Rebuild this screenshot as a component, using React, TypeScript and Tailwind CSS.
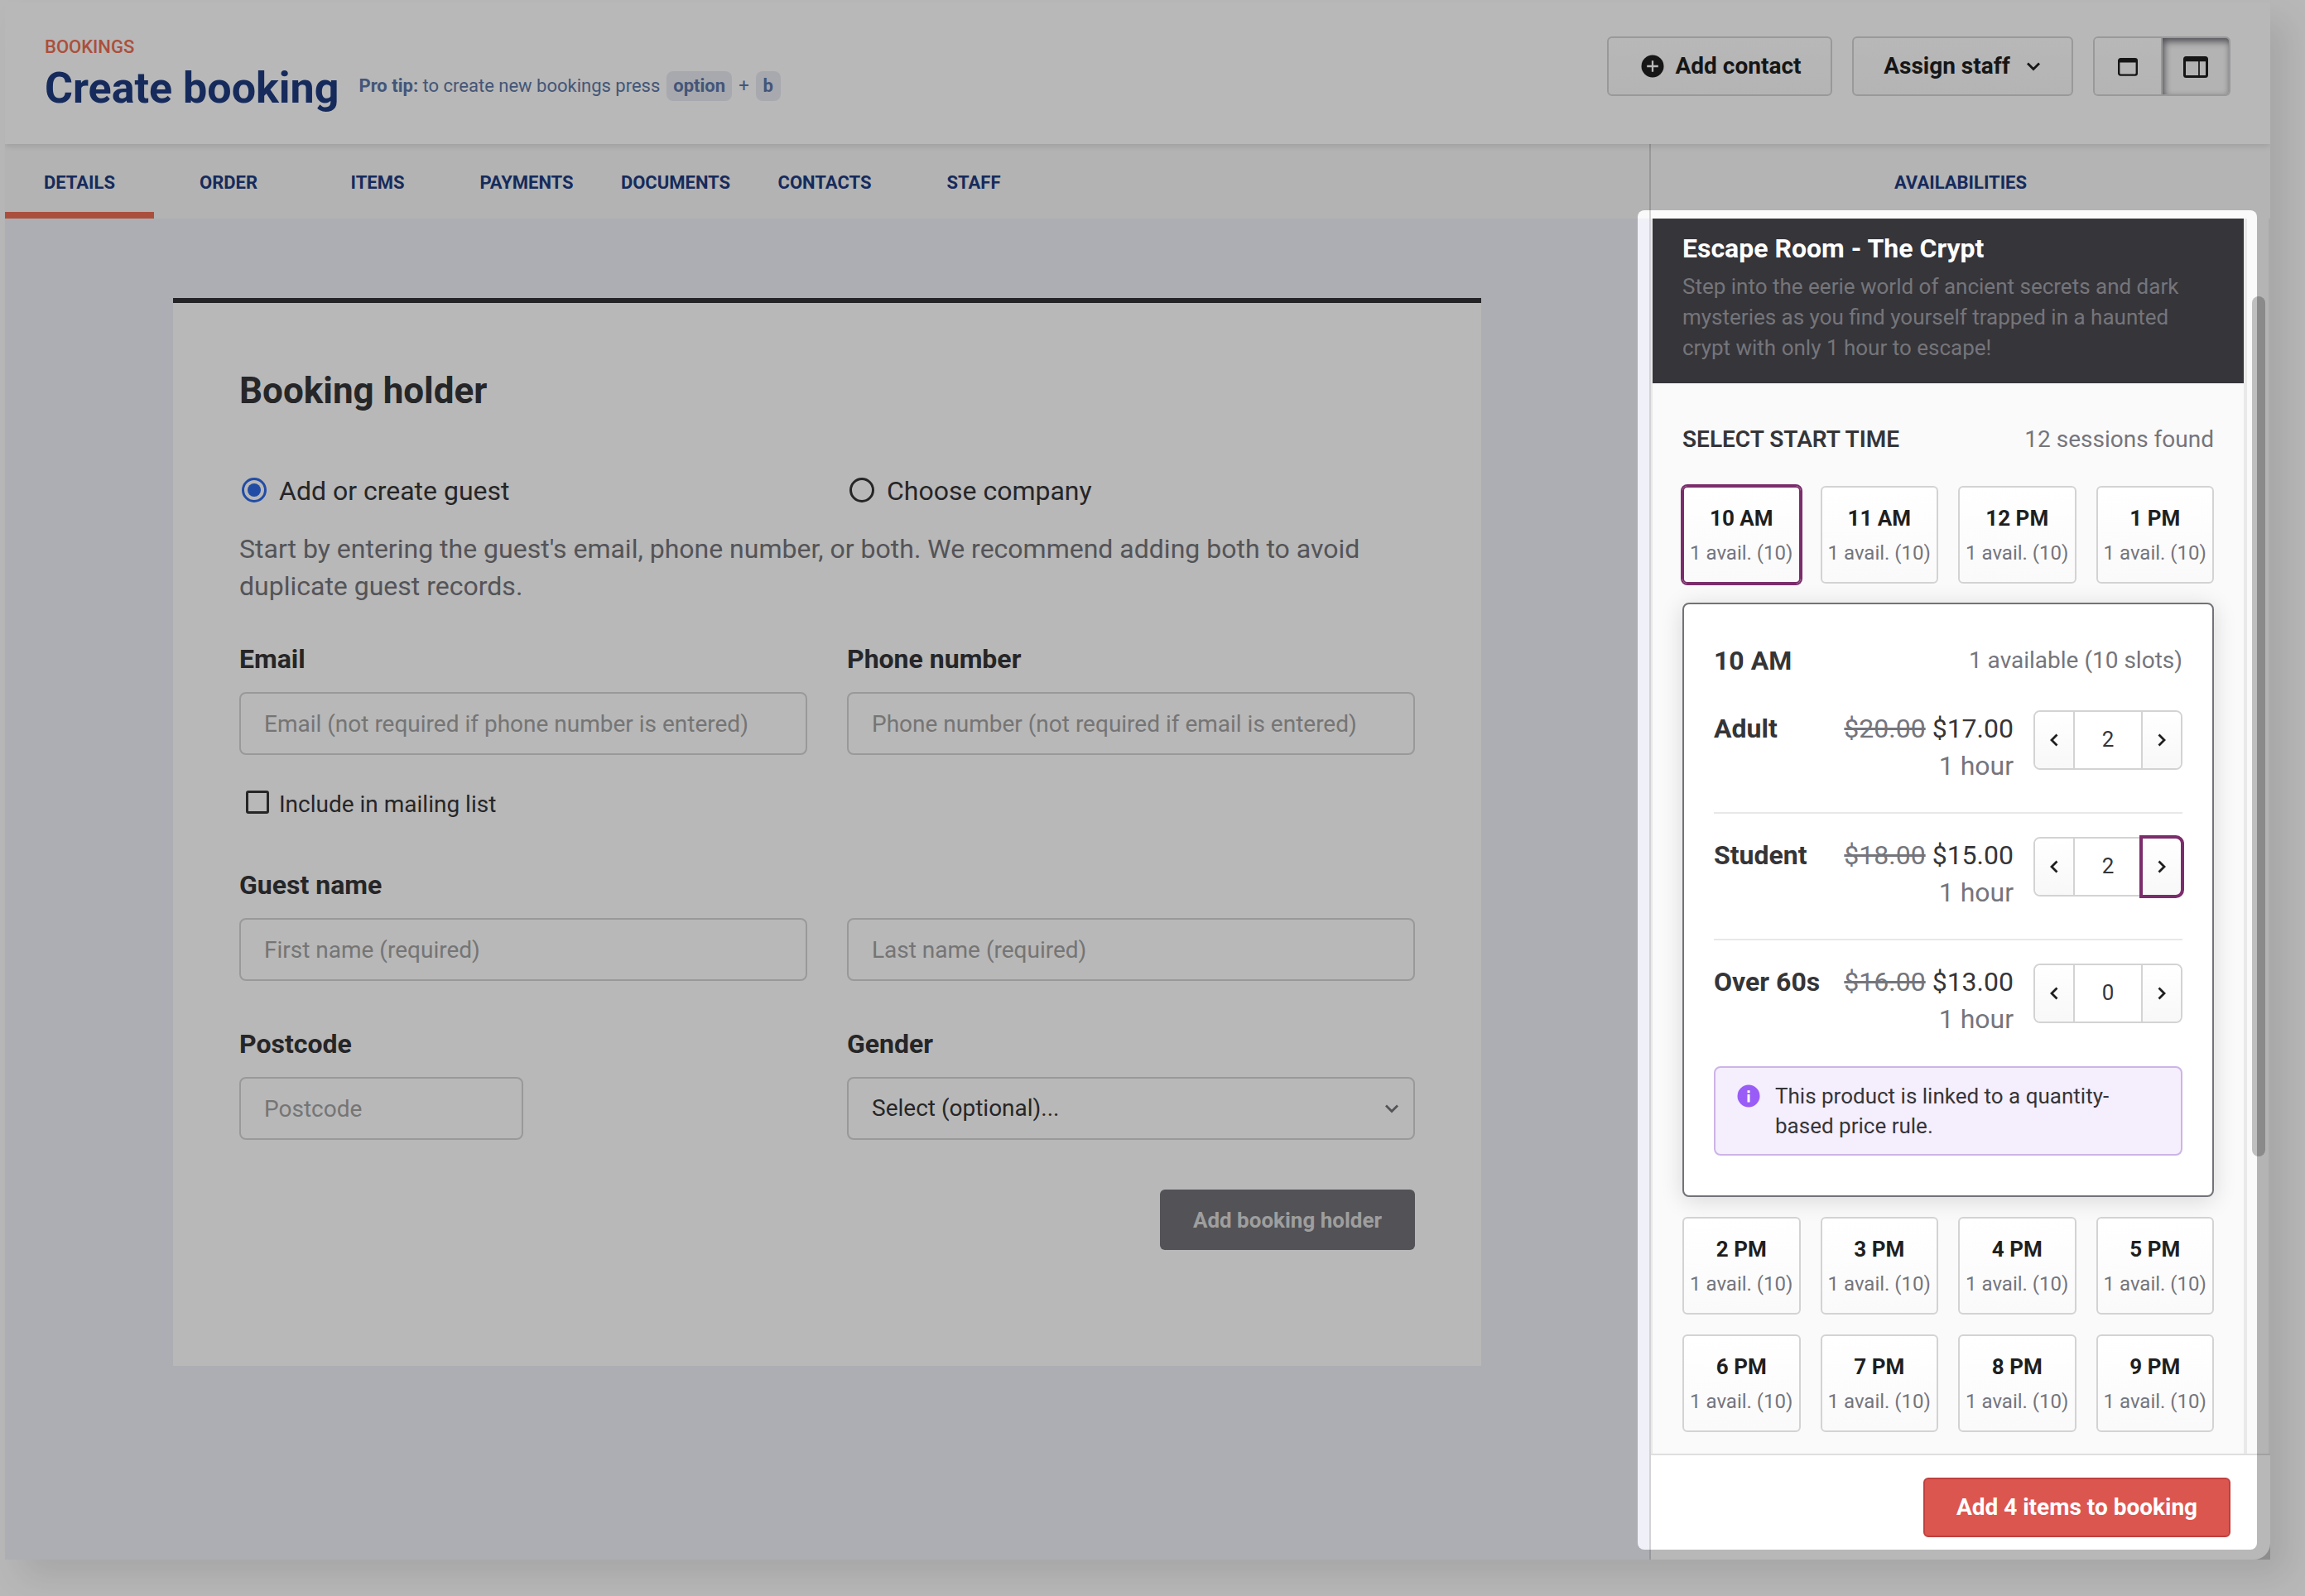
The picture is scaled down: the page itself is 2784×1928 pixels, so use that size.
import { ReactNode } from "react"

const tabs = ["Details", "Order", "Items", "Payments", "Documents", "Contacts", "Staff"]

const sessions = [
  ["10 AM", "11 AM", "12 PM", "1 PM"],
  ["2 PM", "3 PM", "4 PM", "5 PM"],
  ["6 PM", "7 PM", "8 PM", "9 PM"],
]

const tickets = [
  { name: "Adult", was: "$20.00", price: "$17.00", qty: 2, focused: false },
  { name: "Student", was: "$18.00", price: "$15.00", qty: 2, focused: true },
  { name: "Over 60s", was: "$16.00", price: "$13.00", qty: 0, focused: false },
]

function Chevron({ className, d }: { className: string; d: string }) {
  return (
    <svg className={className} viewBox="0 0 20 20" fill="none" stroke="currentColor" strokeWidth="2.8">
      <path d={d} />
    </svg>
  )
}

const LEFT = "M13.5 3.5 7 10l6.5 6.5"
const RIGHT = "M6.5 3.5 13 10l-6.5 6.5"
const DOWN = "M3 6.5l7 7 7-7"

function Header() {
  return (
    <header className="relative z-10 flex h-[171px] shrink-0 justify-between bg-white px-12 shadow-[0_2px_8px_rgba(0,0,0,0.14)] [clip-path:inset(0_0_-20px_0)]">
      <div className="pt-[41px]">
        <p className="text-[22px] leading-[26px] font-medium uppercase text-[#ee6e55]">Bookings</p>
        <div className="mt-[7px] flex items-center gap-6">
          <h1 className="text-[52px] leading-[60px] font-bold text-[#1f3c80]">Create booking</h1>
          <p className="mb-1.5 flex items-center text-[22px] leading-[26px] whitespace-pre text-[#5d78a7]">
            <b className="font-bold">Pro tip:</b> to create new bookings press
            <span className="ml-2 flex h-9 items-center rounded-lg bg-[#e9ebf3] px-2 font-bold">option</span>
            <span className="mx-2">+</span>
            <span className="flex h-9 items-center rounded-lg bg-[#e9ebf3] px-[9px] font-bold">b</span>
          </p>
        </div>
      </div>
      <div className="flex gap-6 pt-[41px] text-[28px] font-bold text-[#1f1f1f]">
        <button className="flex h-[72px] w-[272px] items-center justify-center gap-3.5 rounded-md border-2 border-[#d5d5d5] bg-linear-to-b from-white to-[#fafafa] pl-[3px]">
          <svg className="size-7" viewBox="0 0 28 28">
            <circle cx="14" cy="14" r="13.5" fill="#1f1f1f" />
            <path d="M14 7.2v13.6M7.2 14h13.6" stroke="#fff" strokeWidth="2.3" />
          </svg>
          Add contact
        </button>
        <button className="flex h-[72px] w-[267px] items-center justify-center gap-[18px] rounded-md border-2 border-[#d5d5d5] bg-linear-to-b from-white to-[#fafafa]">
          Assign staff
          <Chevron className="size-5" d={DOWN} />
        </button>
        <div className="flex h-[72px] w-[166px] overflow-hidden rounded-md border-2 border-[#d5d5d5]">
          <button className="flex w-20 items-center justify-center bg-linear-to-b from-white to-[#fafafa] pt-px">
            <svg className="h-[22px] w-6" viewBox="0 0 24 22">
              <rect x="1.2" y="1.2" width="21.6" height="19.4" rx="2" fill="none" stroke="#1f1f1f" strokeWidth="2.4" />
              <path d="M1 3.5h22" stroke="#1f1f1f" strokeWidth="4" />
            </svg>
          </button>
          <button className="flex flex-1 items-center justify-center border-l-2 border-[#d5d5d5] bg-[#f9f9f9] pt-px shadow-[inset_2px_4px_8px_rgba(30,30,45,0.65)]">
            <svg className="h-[26px] w-[30px]" viewBox="0 0 30 26">
              <rect x="1.5" y="1.5" width="27" height="23" rx="2" fill="none" stroke="#1f1f1f" strokeWidth="3" />
              <path d="M1 4h28" stroke="#1f1f1f" strokeWidth="4.5" />
              <path d="M19 4v21" stroke="#1f1f1f" strokeWidth="1.7" />
            </svg>
          </button>
        </div>
      </div>
    </header>
  )
}

function Field({ label, children }: { label: string; children: ReactNode }) {
  return (
    <div>
      <p className="mb-5 h-[41px] text-[32px] leading-[42px] font-bold">{label}</p>
      {children}
    </div>
  )
}

function Input({ placeholder, className = "w-full" }: { placeholder: string; className?: string }) {
  return (
    <input
      className={`block h-[76px] rounded-lg border-2 border-[#d5d5d5] bg-white px-7 text-[28px] placeholder:text-[#a3a3a3] ${className}`}
      placeholder={placeholder}
    />
  )
}

function BookingHolder() {
  return (
    <section className="mx-auto mt-24 h-[1290px] w-[1580px] border-t-[6px] border-[#333336] bg-white p-20 text-[32px] text-[#353538]">
      <h2 className="text-[44px] leading-[52px] font-bold">Booking holder</h2>
      <div className="mt-[74px] grid h-10 grid-cols-2 gap-12 leading-[42px]">
        <label className="flex gap-[15px]">
          <span className="mt-[5px] ml-[3px] flex size-[30px] items-center justify-center rounded-full border-[3px] border-[#2e6ae6]">
            <span className="size-4 rounded-full bg-[#2e6ae6]" />
          </span>
          Add or create guest
        </label>
        <label className="flex gap-[15px]">
          <span className="mt-[5px] ml-[3px] size-[30px] rounded-full border-[3px] border-[#353538]" />
          Choose company
        </label>
      </div>
      <p className="mt-[29px] leading-[45px] text-[#75757a]">
        Start by entering the guest's email, phone number, or both. We recommend adding both to avoid duplicate guest records.
      </p>
      <div className="mt-[44px] grid grid-cols-2 gap-x-12">
        <Field label="Email">
          <Input placeholder="Email (not required if phone number is entered)" />
        </Field>
        <Field label="Phone number">
          <Input placeholder="Phone number (not required if email is entered)" />
        </Field>
      </div>
      <label className="mt-[38px] flex h-10 gap-3 pl-2 text-[28px] leading-[43px]">
        <span className="mt-[5px] size-7 rounded-[3px] border-[3px] border-[#353538]" />
        Include in mailing list
      </label>
      <div className="mt-[58px] grid grid-cols-2 gap-x-12 gap-y-[55px]">
        <Field label="Guest name">
          <Input placeholder="First name (required)" />
        </Field>
        <Field label="">
          <Input placeholder="Last name (required)" />
        </Field>
        <Field label="Postcode">
          <Input placeholder="Postcode" className="w-[343px]" />
        </Field>
        <Field label="Gender">
          <div className="flex h-[76px] items-center justify-between rounded-lg border-2 border-[#d5d5d5] pr-4 pl-7 text-[28px]">
            Select (optional)...
            <Chevron className="size-5 text-[#75757a]" d={DOWN} />
          </div>
        </Field>
      </div>
      <button className="mt-[60px] ml-auto flex h-[73px] w-[308px] items-center justify-center rounded-md bg-[#737278] pt-0.5 text-[26px] font-bold text-[#dcdcdc]">
        Add booking holder
      </button>
    </section>
  )
}

function SessionRow({ times, selected }: { times: string[]; selected?: string }) {
  return (
    <div className="grid grid-cols-4 gap-6">
      {times.map((time) => (
        <button
          key={time}
          className={`flex flex-col items-center rounded-md border-2 bg-linear-to-b from-white to-[#fafafa] pt-4 pb-3.5 whitespace-nowrap ${
            time === selected ? "border-[#7b2d6b] ring-2 ring-[#7b2d6b]" : "border-[#d3d3d3]"
          }`}
        >
          <span className="text-[26px] leading-[42px] font-bold text-[#1f1f1f]">{time}</span>
          <span className="text-2xl leading-[42px] text-[#75757c]">1 avail. (10)</span>
        </button>
      ))}
    </div>
  )
}

function Stepper({ qty, focused }: { qty: number; focused: boolean }) {
  return (
    <div className="ml-6 flex h-[72px] w-[180px] rounded-lg border-2 border-[#d3d3d3] text-[26px] text-[#1f1f1f]">
      <button className="flex w-[46px] items-center justify-center rounded-l-md bg-linear-to-b from-white to-[#f8f8f8]">
        <Chevron className="size-5" d={LEFT} />
      </button>
      <div className="flex flex-1 items-center justify-center border-x-2 border-[#d3d3d3] pb-0.5 text-[#353538]">{qty}</div>
      <button
        className={`flex w-[46px] items-center justify-center rounded-r-md bg-linear-to-b from-white to-[#f8f8f8] ${
          focused ? "outline-4 outline-[#7b2d6b]" : ""
        }`}
      >
        <Chevron className="size-5" d={RIGHT} />
      </button>
    </div>
  )
}

function SessionDetail() {
  return (
    <div className="mt-[23px] mb-6 h-[718px] rounded-lg border-2 border-[#737278] bg-white px-9 pt-12 text-[#353538] shadow-[0_4px_28px_rgba(0,0,0,0.14)]">
      <div className="flex items-center justify-between leading-10">
        <h3 className="text-[32px] font-bold">10 AM</h3>
        <span className="text-[28px] text-[#75757c]">1 available (10 slots)</span>
      </div>
      <div className="mt-10 divide-y-2 divide-[#e8e8e8]">
        {tickets.map((t) => (
          <div key={t.name} className="mb-[28px] flex h-[125px] text-[32px] leading-[45px] last:mb-0">
            <span className="flex-1 font-bold">{t.name}</span>
            <div className="text-right">
              <p>
                <s className="text-[#75757c]">{t.was}</s> {t.price}
              </p>
              <p className="text-[#75757c]">1 hour</p>
            </div>
            <Stepper qty={t.qty} focused={t.focused} />
          </div>
        ))}
      </div>
      <div className="-mt-px flex h-[108px] gap-[18px] rounded-lg border-2 border-[#cdb4e6] bg-[#f5eefd] pt-4 pl-[26px] text-[26px] leading-9">
        <svg className="mt-1 size-7 shrink-0" viewBox="0 0 28 28">
          <circle cx="14" cy="14" r="13.5" fill="#9a5cf7" />
          <path d="M14 12v9.5M14 7.3v3" stroke="#fff" strokeWidth="3" />
        </svg>
        <p className="w-[420px]">This product is linked to a quantity-based price rule.</p>
      </div>
    </div>
  )
}

function Sidebar() {
  return (
    <aside className="flex w-[750px] flex-col border-l-2 border-[#d3d3d6] bg-[#fafafa]">
      <div className="flex h-[90px] shrink-0 items-center justify-center pt-0.5 text-[22px] font-bold uppercase text-[#1f3c80]">Availabilities</div>
      <div className="flex h-[1492px] shrink-0 border-r-2 border-[#ececec]">
        <div className="w-[720px] border-r-4 border-l-2 border-[#e9e9e9]">
          <div className="h-[199px] bg-[#36353a] px-9 pt-4">
            <h2 className="text-[32px] leading-10 font-bold text-white">Escape Room - The Crypt</h2>
            <p className="mt-2 text-[26px] leading-[37px] text-[#75757a]">
              Step into the eerie world of ancient secrets and dark mysteries as you find yourself trapped in a haunted crypt with only 1 hour to escape!
            </p>
          </div>
          <div className="px-9 pt-12">
            <div className="mb-9 flex items-center justify-between text-[28px] leading-10">
              <h3 className="font-semibold text-[#353538] uppercase">Select start time</h3>
              <span className="text-[#75757c]">12 sessions found</span>
            </div>
            <SessionRow times={sessions[0]} selected="10 AM" />
            <SessionDetail />
            <div className="flex flex-col gap-6">
              <SessionRow times={sessions[1]} />
              <SessionRow times={sessions[2]} />
            </div>
          </div>
        </div>
        <div className="mt-[94px] ml-[6px] h-[1039px] w-4 rounded-full bg-[#bfbfbf]" />
      </div>
      <footer className="flex flex-1 justify-end border-t-2 border-[#dfdfdf] bg-[#c4c4c4]">
        <div className="flex h-full w-full justify-end rounded-br-[20px] bg-white pt-[27px] pr-12">
          <button className="h-[72px] w-[371px] rounded-md border-2 border-[#bf403e] bg-[#dc5650] text-[28px] font-bold text-white">
            Add 4 items to booking
          </button>
        </div>
      </footer>
    </aside>
  )
}

export default function App() {
  return (
    <div className="relative h-[1928px] w-[2784px] overflow-hidden bg-white pt-[3px] pl-[6px] [font-family:Roboto,sans-serif]">
      <div className="flex h-[1881px] w-[2736px] flex-col shadow-[20px_20px_40px_rgba(0,0,0,0.1)]">
        <Header />
        <div className="flex flex-1">
          <main className="flex-1 bg-[#f0f1f8]">
            <nav className="flex h-[90px] bg-[#f9f9f9] text-[22px] font-bold uppercase text-[#1f3c80]">
              {tabs.map((tab, i) => (
                <a
                  key={tab}
                  className={`flex w-[180px] items-center justify-center border-b-8 pt-2.5 ${i === 0 ? "border-[#ee6e55]" : "border-transparent"}`}
                >
                  {tab}
                </a>
              ))}
            </nav>
            <BookingHolder />
          </main>
          <Sidebar />
        </div>
      </div>
      {/* dims everything around the availabilities panel */}
      <div className="pointer-events-none absolute top-[254px] left-[1978px] z-20 h-[1618px] w-[748px] rounded-lg shadow-[0_0_0_2800px_rgba(0,0,0,0.28)]" />
    </div>
  )
}
